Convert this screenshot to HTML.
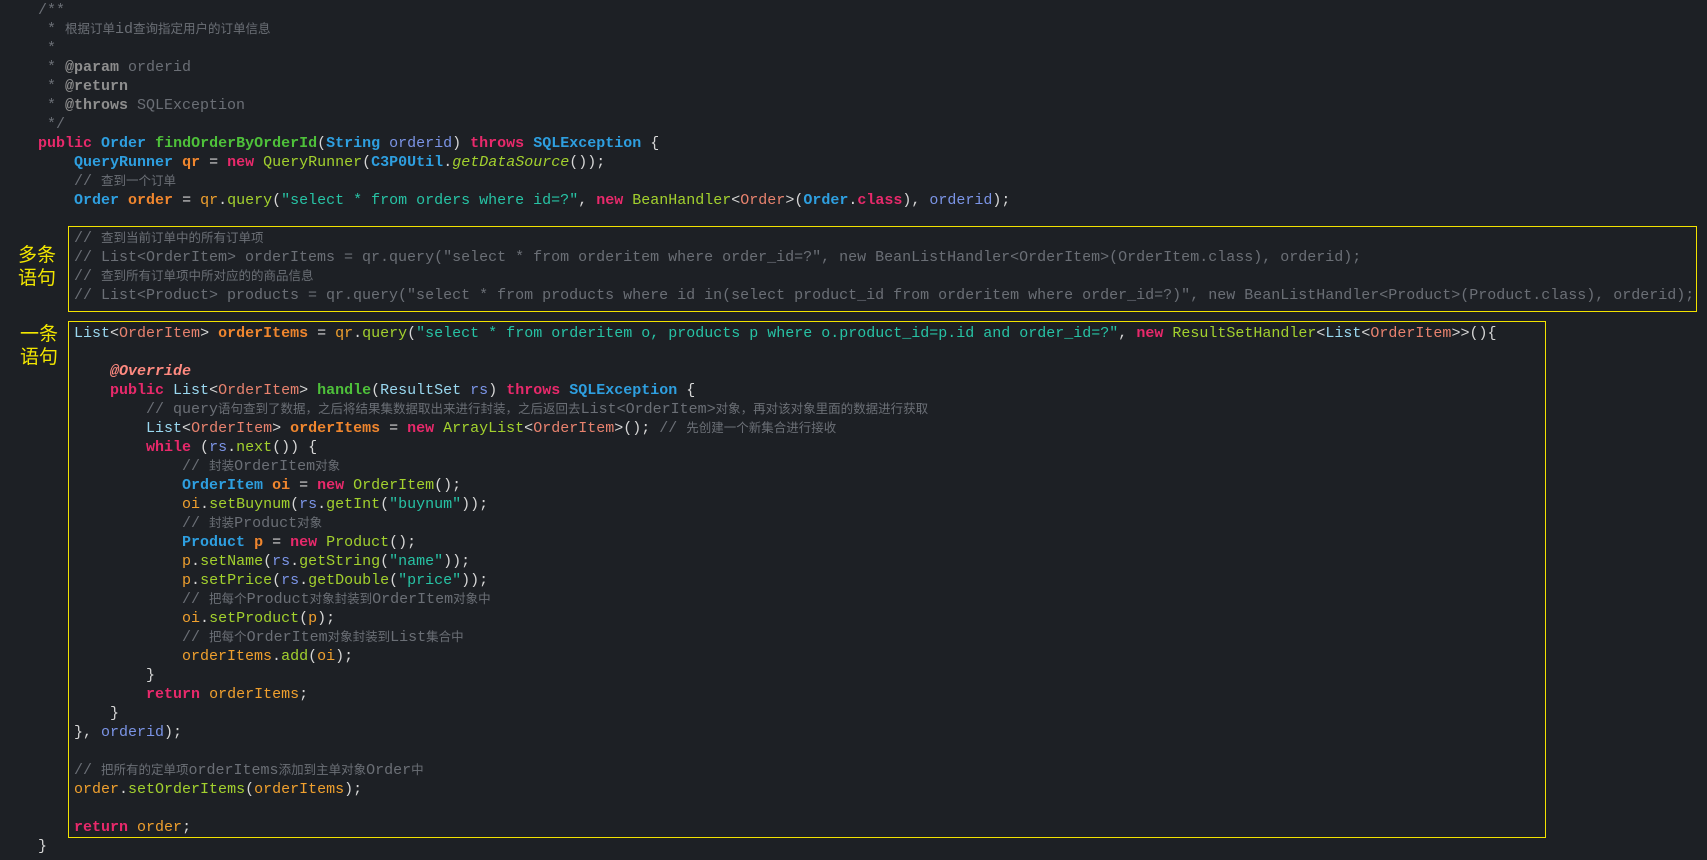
<!DOCTYPE html>
<html><head><meta charset="utf-8"><style>
html,body{margin:0;padding:0;background:#1d2025;width:1707px;height:860px;overflow:hidden}
pre{position:absolute;left:38px;top:1px;margin:0;font-family:"Liberation Mono",monospace;font-size:15px;line-height:19px;color:#d6d6d6;white-space:pre}
i{font-style:normal;font-family:"Noto Sans CJK SC",sans-serif;font-size:12.5px;line-height:0;vertical-align:baseline}
.c{color:#6b6f76}.ca{color:#8e8e8e;font-weight:bold}
.k{color:#e8296b;font-weight:bold}
.t{color:#2e9fe0;font-weight:bold}
.f{color:#4ec13a;font-weight:bold}
.m{color:#a3d12e}
.v{color:#f0a02e}.vb{color:#f0862e;font-weight:bold}
.p{color:#7b94e6}
.s{color:#27c3a5}
.l{color:#9ad8f0}.o{color:#e8826e}
.an{color:#ff8a80;font-weight:bold;font-style:italic}
.it{font-style:italic;color:#a3d12e}
.box{position:absolute;border:1px solid #f2e200}
.lab{position:absolute;color:#f2e600;font-family:"Noto Sans CJK SC",sans-serif;font-size:19px;line-height:23px}
</style></head><body>
<div class="box" style="left:68px;top:226px;width:1627px;height:84px"></div>
<div class="box" style="left:68px;top:321px;width:1476px;height:515px"></div>
<div class="lab" style="left:18px;top:242px">多条<br>语句</div>
<div class="lab" style="left:20px;top:321px">一条<br>语句</div>
<pre><span class="c">/**
 * <i>根据订单</i>id<i>查询指定用户的订单信息</i>
 *
 * <span class="ca">@param</span> orderid
 * <span class="ca">@return</span>
 * <span class="ca">@throws</span> SQLException
 */</span>
<span class="k">public</span> <span class="t">Order</span> <span class="f">findOrderByOrderId</span>(<span class="t">String</span> <span class="p">orderid</span>) <span class="k">throws</span> <span class="t">SQLException</span> {
    <span class="t">QueryRunner</span> <span class="vb">qr</span> = <span class="k">new</span> <span class="m">QueryRunner</span>(<span class="t">C3P0Util</span>.<span class="it">getDataSource</span>());
    <span class="c">// <i>查到一个订单</i></span>
    <span class="t">Order</span> <span class="vb">order</span> = <span class="v">qr</span>.<span class="m">query</span>(<span class="s">"select * from orders where id=?"</span>, <span class="k">new</span> <span class="m">BeanHandler</span>&lt;<span class="o">Order</span>&gt;(<span class="t">Order</span>.<span class="k">class</span>), <span class="p">orderid</span>);

<span class="c">    // <i>查到当前订单中的所有订单项</i>
    // List&lt;OrderItem&gt; orderItems = qr.query("select * from orderitem where order_id=?", new BeanListHandler&lt;OrderItem&gt;(OrderItem.class), orderid);
    // <i>查到所有订单项中所对应的的商品信息</i>
    // List&lt;Product&gt; products = qr.query("select * from products where id in(select product_id from orderitem where order_id=?)", new BeanListHandler&lt;Product&gt;(Product.class), orderid);</span>

    <span class="l">List</span>&lt;<span class="o">OrderItem</span>&gt; <span class="vb">orderItems</span> = <span class="v">qr</span>.<span class="m">query</span>(<span class="s">"select * from orderitem o, products p where o.product_id=p.id and order_id=?"</span>, <span class="k">new</span> <span class="m">ResultSetHandler</span>&lt;<span class="l">List</span>&lt;<span class="o">OrderItem</span>&gt;&gt;(){

        <span class="an">@Override</span>
        <span class="k">public</span> <span class="l">List</span>&lt;<span class="o">OrderItem</span>&gt; <span class="f">handle</span>(<span class="l">ResultSet</span> <span class="p">rs</span>) <span class="k">throws</span> <span class="t">SQLException</span> {
            <span class="c">// query<i>语句查到了数据，之后将结果集数据取出来进行封装，之后返回去</i>List&lt;OrderItem&gt;<i>对象，再对该对象里面的数据进行获取</i></span>
            <span class="l">List</span>&lt;<span class="o">OrderItem</span>&gt; <span class="vb">orderItems</span> = <span class="k">new</span> <span class="m">ArrayList</span>&lt;<span class="o">OrderItem</span>&gt;(); <span class="c">// <i>先创建一个新集合进行接收</i></span>
            <span class="k">while</span> (<span class="p">rs</span>.<span class="m">next</span>()) {
                <span class="c">// <i>封装</i>OrderItem<i>对象</i></span>
                <span class="t">OrderItem</span> <span class="vb">oi</span> = <span class="k">new</span> <span class="m">OrderItem</span>();
                <span class="v">oi</span>.<span class="m">setBuynum</span>(<span class="p">rs</span>.<span class="m">getInt</span>(<span class="s">"buynum"</span>));
                <span class="c">// <i>封装</i>Product<i>对象</i></span>
                <span class="t">Product</span> <span class="vb">p</span> = <span class="k">new</span> <span class="m">Product</span>();
                <span class="v">p</span>.<span class="m">setName</span>(<span class="p">rs</span>.<span class="m">getString</span>(<span class="s">"name"</span>));
                <span class="v">p</span>.<span class="m">setPrice</span>(<span class="p">rs</span>.<span class="m">getDouble</span>(<span class="s">"price"</span>));
                <span class="c">// <i>把每个</i>Product<i>对象封装到</i>OrderItem<i>对象中</i></span>
                <span class="v">oi</span>.<span class="m">setProduct</span>(<span class="v">p</span>);
                <span class="c">// <i>把每个</i>OrderItem<i>对象封装到</i>List<i>集合中</i></span>
                <span class="v">orderItems</span>.<span class="m">add</span>(<span class="v">oi</span>);
            }
            <span class="k">return</span> <span class="v">orderItems</span>;
        }
    }, <span class="p">orderid</span>);

    <span class="c">// <i>把所有的定单项</i>orderItems<i>添加到主单对象</i>Order<i>中</i></span>
    <span class="v">order</span>.<span class="m">setOrderItems</span>(<span class="v">orderItems</span>);

    <span class="k">return</span> <span class="v">order</span>;
}</pre>
</body></html>
